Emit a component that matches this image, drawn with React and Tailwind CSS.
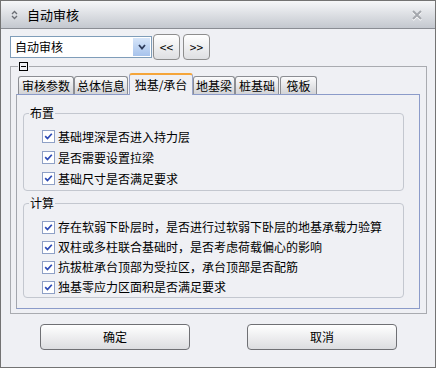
import React from 'react'

const tabs = [
  { label: '审核参数', w: 'w-[56px]', gap: 'ml-0' },
  { label: '总体信息', w: 'w-[54px]', gap: 'ml-0' },
  { label: '独基/承台', w: 'w-[64px]', gap: 'ml-[1px]', active: true },
  { label: '地基梁', w: 'w-[42px]', gap: 'ml-0' },
  { label: '桩基础', w: 'w-[44px]', gap: 'ml-0' },
  { label: '筏板', w: 'w-[37px]', gap: 'ml-[1px]' },
]

const layout = ['基础埋深是否进入持力层', '是否需要设置拉梁', '基础尺寸是否满足要求']
const calc = [
  '存在软弱下卧层时，是否进行过软弱下卧层的地基承载力验算',
  '双柱或多柱联合基础时，是否考虑荷载偏心的影响',
  '抗拔桩承台顶部为受拉区，承台顶部是否配筋',
  '独基零应力区面积是否满足要求',
]

function Check({ label, h }) {
  return (
    <div className={`flex items-center ${h}`}>
      <span className="w-[13px] h-[13px] border border-[#8ea0c6] bg-white flex items-center justify-center shrink-0">
        <svg width="9" height="9" viewBox="0 0 9 9">
          <path d="M1.2 4.2 L3.5 6.6 L7.8 1.8" stroke="#2b49b5" strokeWidth="1.7" fill="none" />
        </svg>
      </span>
      <span className="ml-[3px] leading-[14px] whitespace-nowrap">{label}</span>
    </div>
  )
}

function Group({ title, children, className }) {
  return (
    <div className={`border border-[#c3c7cf] rounded-[4px] ${className}`}>
      <div className="-mt-[8px] ml-[5px] h-[14px] leading-[14px] px-[1px] w-fit bg-[#eff0f4]">{title}</div>
      {children}
    </div>
  )
}

export default function App() {
  return (
    <div className="w-[436px] h-[368px] border border-[#737373] bg-[#eff0f4] flex flex-col text-[12px] text-black font-['Noto_Sans_CJK_SC','Noto_Sans',sans-serif] overflow-hidden">
      {/* title bar */}
      <div className="h-[28px] shrink-0 border-b border-[#8a8d94] bg-gradient-to-b from-[#f6f7f9] to-[#c4c8cf] flex items-center">
        <svg width="7" height="10" viewBox="0 0 7 10" className="ml-[10px]">
          <path d="M1 4 L3.5 1.5 L6 4 M1 6 L3.5 8.5 L6 6" stroke="#6b6e74" strokeWidth="1.3" fill="none" />
        </svg>
        <span className="ml-[9px] text-[13px] leading-[16px]">自动审核</span>
        <svg width="12" height="12" viewBox="0 0 12 12" className="ml-auto mr-[12px]">
          <path d="M2 3 L10 11 M10 3 L2 11" stroke="#ffffff" strokeWidth="2" />
          <path d="M2 2 L10 10 M10 2 L2 10" stroke="#a4a7ad" strokeWidth="2" />
        </svg>
      </div>

      {/* toolbar */}
      <div className="mt-[5px] ml-[9px] h-[26px] flex items-center">
        <div className="w-[142px] h-[22px] border border-[#7f9db9] bg-white flex items-center">
          <span className="ml-[4px] leading-[14px] flex-1">自动审核</span>
          <div className="w-[17px] h-[18px] mr-[1px] bg-gradient-to-b from-[#d6e5f9] to-[#a7c3ec] flex items-center justify-center">
            <svg width="8" height="6" viewBox="0 0 8 6">
              <path d="M1 1 L4 4.5 L7 1" stroke="#2d3a5a" strokeWidth="1.8" fill="none" />
            </svg>
          </div>
        </div>
        <button className="ml-[1px] w-[27px] h-[26px] border border-[#8d8d8d] rounded-[4px] bg-gradient-to-b from-[#ffffff] to-[#dedfe2] leading-[14px]">&lt;&lt;</button>
        <button className="ml-[3px] w-[27px] h-[26px] border border-[#8d8d8d] rounded-[4px] bg-gradient-to-b from-[#ffffff] to-[#dedfe2] leading-[14px]">&gt;&gt;</button>
      </div>

      {/* outer group */}
      <div className="mt-[6px] ml-[9px] w-[417px] h-[248px] border border-[#a9abb0] flex flex-col">
        <div className="-mt-[5px] ml-[7px] w-fit px-[1px] bg-[#eff0f4]">
          <div className="w-[9px] h-[9px] border border-black flex items-center justify-center">
            <div className="w-[5px] h-[1px] bg-black" />
          </div>
        </div>

        {/* tabs */}
        <div className="mt-[1px] ml-[7px] h-[22px] flex items-end">
          {tabs.map(t =>
            t.active ? (
              <div key={t.label}
                className={`${t.w} ${t.gap} h-[22px] -mb-[1px] relative z-10 bg-[#eff0f4] border-x border-[#9aa5c8] border-t-2 border-t-[#f5a53a] rounded-t-[3px] flex items-center justify-center leading-[14px]`}>
                {t.label}
              </div>
            ) : (
              <div key={t.label}
                className={`${t.w} ${t.gap} h-[18px] border border-b-0 border-[#8c8e93] rounded-t-[3px] bg-gradient-to-b from-[#fbfbfc] to-[#d2d3d6] flex items-center justify-center leading-[14px]`}>
                {t.label}
              </div>
            )
          )}
        </div>

        {/* tab panel */}
        <div className="ml-[5px] w-[404px] h-[215px] border border-[#8b9bc9] border-l-[#a3a6ad] flex flex-col">
          <Group title="布置" className="mt-[18px] ml-[6px] w-[381px]">
            <div className="mt-[6px] pl-[18px] pb-[1px]">
              {layout.map(l => <Check key={l} label={l} h="h-[21px]" />)}
            </div>
          </Group>
          <Group title="计算" className="mt-[12px] ml-[6px] w-[381px]">
            <div className="mt-[7px] pl-[18px]">
              {calc.map(l => <Check key={l} label={l} h="h-[20px]" />)}
            </div>
          </Group>
        </div>
      </div>

      {/* buttons */}
      <div className="mt-[10px] ml-[39px] flex gap-[57px]">
        <button className="w-[150px] h-[26px] border border-[#6f7074] rounded-[4px] bg-gradient-to-b from-[#ffffff] to-[#dcdde0] leading-[14px]">确定</button>
        <button className="w-[150px] h-[26px] border border-[#6f7074] rounded-[4px] bg-gradient-to-b from-[#ffffff] to-[#dcdde0] leading-[14px]">取消</button>
      </div>
    </div>
  )
}
